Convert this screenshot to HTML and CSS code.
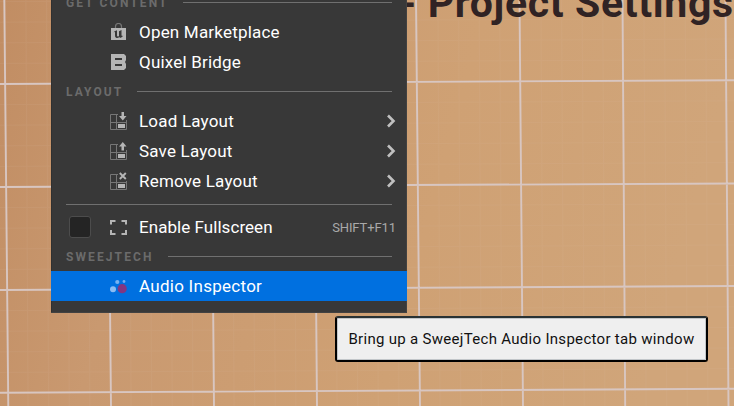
FILE: index.html
```html
<!DOCTYPE html>
<html lang="en">
<head>
<meta charset="utf-8">
<title>Window menu</title>
<link rel="stylesheet" href="styles.css">
</head>
<body>
<svg class="board" viewBox="0 0 734 406" aria-hidden="true">
  <defs>
    <linearGradient id="wood" x1="0" x2="1" y1="0" y2="0.15">
      <stop offset="0" stop-color="#c18d63"/>
      <stop offset=".25" stop-color="#c99970"/>
      <stop offset=".65" stop-color="#cfa174"/>
      <stop offset="1" stop-color="#d0a57a"/>
    </linearGradient>
    <pattern id="fine" width="20.6" height="20.6" patternUnits="userSpaceOnUse" patternTransform="translate(4.7 -19.5) rotate(-.3)">
      <path class="fine" d="M0 .5H21M.5 0V21"/>
    </pattern>
  </defs>
  <rect width="734" height="406" fill="url(#wood)"/>
  <rect width="734" height="406" fill="url(#fine)"/>
  <path class="grid" d="M4.3 0L8.3 406M107 0L111 406M210.500 0L214 406M313.500 0L317 406M416 0L420 406M519.500 0L523 406M622.500 0L625.200 406M725.500 0L728.500 406M0 84L734 80.200M0 187L734 183.500M0 290L734 286M0 392.700L734 388.800"/>
</svg>
<h1 class="title">- Project Settings</h1>

<nav class="menu">
  <div class="heading"><span>GET CONTENT</span></div>
  <div class="item">
    <svg class="icon" viewBox="0 0 18 18"><path d="M5.500 6V3.500a3 3 0 0 1 6 0V6" fill="none" stroke="#777" stroke-width="1.200"/><path d="M1 5h15v12H1z" fill="#b5b5b5"/><path d="M3.500 9.200Q5 7.500 7 7.200V12.500Q7.300 14.300 9 13V8.200L11.500 7V12.500Q12.200 13.500 13.300 12.300Q12.300 15 10 15L9.400 14Q7.700 15.700 6 14.800Q4.800 14.200 5 12V9Z" fill="#383838"/></svg>
    <span>Open Marketplace</span>
  </div>
  <div class="item">
    <svg class="icon" viewBox="0 0 18 18"><path d="M1 1h13l2 2v4l-1 2 1 2v4l-2 2H1z" fill="#b5b5b5"/><path d="M5 6h7M5 12h7" stroke="#383838" stroke-width="2"/></svg>
    <span>Quixel Bridge</span>
  </div>
  <div class="heading"><span>LAYOUT</span></div>
  <div class="item">
    <svg class="icon" viewBox="0 0 18 18"><path class="frame" d="M8 2.500H.5v15h16V8M6.500 2.500v15M.5 10.500h16"/><path class="fill" d="M8 12h7v4H8zM11.500 0h2.500v4h2.500l-3.700 4.500L9 4h2.500z"/></svg>
    <span>Load Layout</span>
    <svg class="arrow" viewBox="0 0 10 14"><path d="M2 1.500l5.500 5.500-5.500 5.500"/></svg>
  </div>
  <div class="item">
    <svg class="icon" viewBox="0 0 18 18"><path class="frame" d="M8 2.500H.5v15h16V8M6.500 2.500v15M.5 10.500h16"/><path class="fill" d="M8 12h7v4H8zM11.500 8.500H14v-4h2.500L12.800 0 9 4.500h2.500z"/></svg>
    <span>Save Layout</span>
    <svg class="arrow" viewBox="0 0 10 14"><path d="M2 1.500l5.500 5.500-5.500 5.500"/></svg>
  </div>
  <div class="item">
    <svg class="icon" viewBox="0 0 18 18"><path class="frame" d="M8 2.500H.5v15h16V9M6.500 2.500v15M.5 10.500h16"/><path class="fill" d="M8 12h7v4H8z"/><path d="M9.800 1l6 6M15.800 1l-6 6" stroke="#b5b5b5" stroke-width="1.900"/></svg>
    <span>Remove Layout</span>
    <svg class="arrow" viewBox="0 0 10 14"><path d="M2 1.500l5.500 5.500-5.500 5.500"/></svg>
  </div>
  <div class="separator"></div>
  <div class="item fullscreen">
    <i class="checkbox"></i>
    <svg class="icon" viewBox="0 0 18 18"><path d="M1 6.500V3h4.500M11.500 3H16v3.500M16 12v4h-4.500M5.500 16H1v-4" fill="none" stroke="#b5b5b5" stroke-width="2"/></svg>
    <span>Enable Fullscreen</span>
    <kbd>SHIFT+F11</kbd>
  </div>
  <div class="heading"><span>SWEEJTECH</span></div>
  <div class="item active">
    <svg class="icon" viewBox="0 0 18 18"><circle cx="3" cy="12.300" r="3" fill="#8bbcf3"/><circle cx="7.300" cy="5" r="2.100" fill="#78b2f1"/><circle cx="14" cy="4.500" r="1.400" fill="#72adf0"/><circle cx="12.200" cy="11.700" r="4.600" fill="#823681"/></svg>
    <span>Audio Inspector</span>
  </div>
</nav>
<div class="tooltip">Bring up a SweejTech Audio Inspector tab window</div>
</body>
</html>
```

FILE: styles.css
```css
* { box-sizing: border-box; }

body {
  margin: 0;
  width: 734px;
  height: 406px;
  position: relative;
  overflow: hidden;
  background: #cb9c70;
  font-family: Roboto, sans-serif;
}

.board { display: block; width: 734px; height: 406px; }
.fine { fill: none; stroke: #dfc0ae; stroke-width: 1; opacity: .1; }
.grid { fill: none; stroke: #d8c6c1; stroke-width: 1.9; }

.title {
  position: absolute;
  left: 400px;
  top: -25px;
  margin: 0;
  color: #302324;
  font-size: 41px;
  line-height: 56px;
  font-weight: 700;
  letter-spacing: .65px;
  white-space: nowrap;
}

.menu {
  position: absolute;
  left: 51px;
  top: -12px;
  width: 356px;
  height: 325px;
  background: #383838;
  box-shadow: inset -1px -1px #424242, inset 1px 0 #303030;
}

.heading {
  display: flex;
  align-items: center;
  gap: 14px;
  height: 29px;
  padding: 0 15px;
  color: #6b6b6b;
  font-size: 12px;
  font-weight: 700;
  letter-spacing: 2.1px;
}
.heading::after { content: ""; flex: 1; height: 1px; background: #707070; }

.item {
  display: flex;
  align-items: center;
  height: 30px;
  padding: 0 11px 0 59px;
  color: #fff;
  font-size: 17px;
  letter-spacing: .2px;
}
.item.active { background: #0070e0; letter-spacing: .27px; }
.item.fullscreen { letter-spacing: .05px; }

.icon { width: 18px; height: 18px; margin-right: 11px; flex: none; }
.frame { fill: none; stroke: #777; stroke-width: 1; }
.fill { fill: #b5b5b5; }

.arrow { width: 10px; height: 14px; margin-left: auto; }
.arrow path { fill: none; stroke: #c0c0c0; stroke-width: 2.6; }

.separator { height: 16px; padding: 8px 15px 7px; }
.separator::before { content: ""; display: block; height: 1px; background: #707070; }

.checkbox {
  width: 22px;
  height: 22px;
  margin: 0 19px 0 -41px;
  border: 1px solid #4c4c4c;
  border-radius: 3px;
  background: #242424;
}

kbd {
  margin-left: auto;
  color: #a9a9a9;
  font: 13px Roboto, sans-serif;
  letter-spacing: -.1px;
}

.tooltip {
  position: absolute;
  left: 335px;
  top: 316px;
  width: 373px;
  height: 46px;
  display: flex;
  align-items: center;
  justify-content: center;
  border: 2px solid #000;
  border-top-color: #293234;
  border-radius: 3px;
  background: #efefef;
  box-shadow: inset 0 0 0 1px #c2c6c9;
  color: #111;
  font-size: 15px;
  letter-spacing: .3px;
  white-space: nowrap;
}
```
